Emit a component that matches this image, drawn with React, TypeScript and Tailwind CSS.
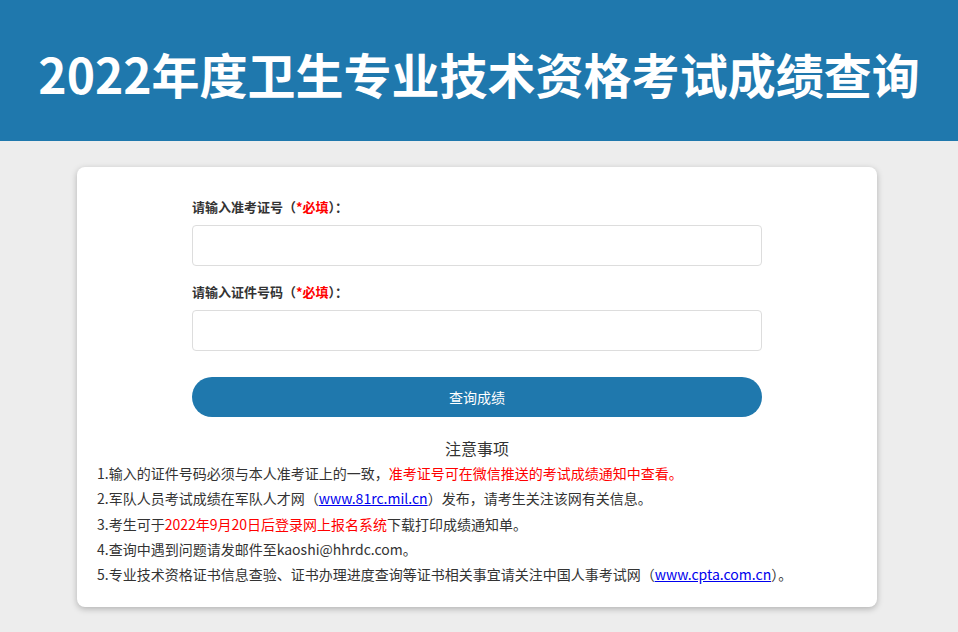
import React from "react";

const font = {
  fontFamily: '"Microsoft YaHei", "Noto Sans CJK SC", "Noto Sans", sans-serif',
};

const App = () => {
  return (
    <div className="min-h-[632px] bg-[#ededed] pb-6" style={font}>
      <div className="h-[141px] bg-[#1f78ad] flex items-center justify-center pt-1">
        <h1 className="text-white font-bold text-[48px] leading-none">
          2022年度卫生专业技术资格考试成绩查询
        </h1>
      </div>

      <div className="ml-[77px] mt-[26px] w-[800px] bg-white rounded-lg shadow-[0_2px_6px_rgba(0,0,0,0.25)] pt-[30px] pb-[20px] px-5">
        <div className="w-[570px] mx-auto">
          <label className="block text-[13px] leading-5 font-bold text-[#333]">
            请输入准考证号（<span className="text-[#ff0000]">*必填</span>）：
          </label>
          <input
            type="text"
            className="mt-2 block w-full h-[41px] border border-[#dddddd] rounded outline-none px-3"
          />
          <label className="block mt-4 text-[13px] leading-5 font-bold text-[#333]">
            请输入证件号码（<span className="text-[#ff0000]">*必填</span>）：
          </label>
          <input
            type="text"
            className="mt-2 block w-full h-[41px] border border-[#dddddd] rounded outline-none px-3"
          />
          <button className="mt-[26px] w-full h-10 rounded-full bg-[#1f78ad] text-white text-[14px]">
            查询成绩
          </button>
        </div>

        <div className="mt-[19px] text-center text-[16px] leading-6 text-[#333]">注意事项</div>
        <div className="mt-[1px] text-[14px] leading-[25.3px] text-[#333]">
          <p>
            1.输入的证件号码必须与本人准考证上的一致，
            <span className="text-[#ff0000]">准考证号可在微信推送的考试成绩通知中查看。</span>
          </p>
          <p>
            2.军队人员考试成绩在军队人才网（
            <a href="#" className="text-[#0000ee] underline">www.81rc.mil.cn</a>
            ）发布，请考生关注该网有关信息。
          </p>
          <p>
            3.考生可于<span className="text-[#ff0000]">2022年9月20日后登录网上报名系统</span>下载打印成绩通知单。
          </p>
          <p>4.查询中遇到问题请发邮件至kaoshi@hhrdc.com。</p>
          <p>
            5.专业技术资格证书信息查验、证书办理进度查询等证书相关事宜请关注中国人事考试网（
            <a href="#" className="text-[#0000ee] underline">www.cpta.com.cn</a>
            ）。
          </p>
        </div>
      </div>
    </div>
  );
};

export default App;
